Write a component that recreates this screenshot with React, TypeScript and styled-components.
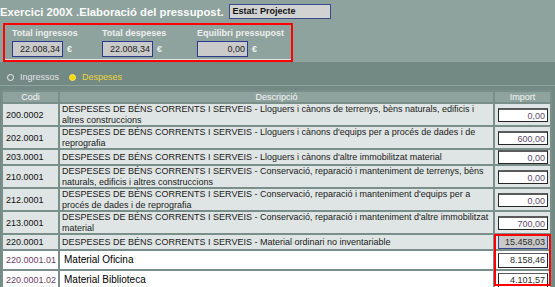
import React from "react";
import styled, { createGlobalStyle } from "styled-components";

type Line = {
  code: string;
  text: string;
  amount: string;
  kind?: "row" | "total" | "sub";
};

const lines: Array<Line> = [
  { code: "200.0002", text: "DESPESES DE BÉNS CORRENTS I SERVEIS - Lloguers i cànons de terrenys, bèns naturals, edificis i altres construccions", amount: "0,00" },
  { code: "202.0001", text: "DESPESES DE BÉNS CORRENTS I SERVEIS - Lloguers i cànons d'equips per a procés de dades i de reprografia", amount: "600,00" },
  { code: "203.0001", text: "DESPESES DE BÉNS CORRENTS I SERVEIS - Lloguers i cànons d'altre immobilitzat material", amount: "0,00" },
  { code: "210.0001", text: "DESPESES DE BÉNS CORRENTS I SERVEIS - Conservació, reparació i manteniment de terrenys, bèns naturals, edificis i altres construccions", amount: "0,00" },
  { code: "212.0001", text: "DESPESES DE BÉNS CORRENTS I SERVEIS - Conservació, reparació i manteniment d'equips per a procés de dades i de reprografia", amount: "0,00" },
  { code: "213.0001", text: "DESPESES DE BÉNS CORRENTS I SERVEIS - Conservació, reparació i manteniment d'altre immobilitzat material", amount: "700,00" },
  { code: "220.0001", text: "DESPESES DE BÉNS CORRENTS I SERVEIS - Material ordinari no inventariable", amount: "15.458,03", kind: "total" },
  { code: "220.0001.01", text: "Material Oficina", amount: "8.158,46", kind: "sub" },
  { code: "220.0001.02", text: "Material Biblioteca", amount: "4.101,57", kind: "sub" },
];

const GlobalStyle = createGlobalStyle`
  html, body {
    margin: 0;
    padding: 0;
  }
  body {
    background: #738984;
    font-family: "Liberation Sans", Arial, sans-serif;
    width: 555px;
    height: 287px;
    overflow: hidden;
  }
`;

const Top = styled.header`
  background: #8fa39e;
  height: 62px;
  overflow: hidden;
`;

const TitleRow = styled.div`
  display: flex;
  align-items: flex-start;
  height: 23px;
`;

const Title = styled.h1`
  margin: 0;
  padding-top: 5px;
  font-size: 11.3px;
  line-height: 14px;
  font-weight: bold;
  color: #fbfbfb;
  white-space: nowrap;
`;

const Estat = styled.div`
  margin: 4px 0 0 5px;
  width: 102px;
  height: 15px;
  box-sizing: border-box;
  background: #d2d2d2;
  border: 1px solid #3b4a8c;
  padding-left: 3px;
  font-size: 9px;
  font-weight: bold;
  line-height: 13px;
  color: #111;
`;

const Totals = styled.section`
  margin-left: 3px;
  width: 290px;
  height: 39px;
  box-sizing: border-box;
  border: 2px solid #ff0000;
`;

const TotalsInner = styled.div`
  display: flex;
  height: 35px;
  box-sizing: border-box;
  border-bottom: 1px solid #dde5e3;
  padding: 3px 0 0 7px;
`;

const Field = styled.div<{ $w?: number }>`
  width: ${(p) => (p.$w ? `${p.$w}px` : "auto")};
`;

const FieldLabel = styled.div`
  font-size: 9px;
  font-weight: bold;
  line-height: 11px;
  color: #eeeeee;
  white-space: nowrap;
`;

const FieldRow = styled.div`
  display: flex;
  align-items: center;
  margin-top: 2px;
`;

const TotalBox = styled.div`
  width: 51px;
  height: 16px;
  box-sizing: border-box;
  background: #cacaca;
  border: 1px solid #2c3a8e;
  padding-right: 2px;
  font-size: 9px;
  line-height: 14px;
  text-align: right;
  color: #222;
`;

const Euro = styled.span`
  margin-left: 4px;
  font-size: 9px;
  font-weight: bold;
  color: #f4f4f4;
`;

const Switch = styled.div`
  display: flex;
  align-items: center;
  height: 24px;
  box-sizing: border-box;
  border-bottom: 1px solid #8fa39e;
  padding: 7px 0 0 7px;
`;

const Option = styled.label<{ $on?: boolean }>`
  display: flex;
  align-items: center;
  margin-right: 10px;
  font-size: 9px;
  color: ${(p) => (p.$on ? "#ead43c" : "#e2e2e2")};

  i {
    width: 7px;
    height: 7px;
    box-sizing: border-box;
    border-radius: 50%;
    margin-right: 6px;
    border: 1px solid ${(p) => (p.$on ? "#ffe85a" : "#f2f2f2")};
    background: ${(p) => (p.$on ? "#ffd800" : "transparent")};
  }
`;

const TableWrap = styled.div`
  position: relative;
  margin: 4px 0 0 1px;
  width: 551px;
`;

const Table = styled.table`
  width: 551px;
  table-layout: fixed;
  border-collapse: separate;
  border-spacing: 2px;
  background: #7a8e8a;
`;

const Mark = styled.div`
  position: absolute;
  left: 493px;
  top: 144px;
  width: 57px;
  height: 52px;
  box-sizing: border-box;
  border: 2px solid #ff0000;
  pointer-events: none;
`;

const Head = styled.th`
  height: 10px;
  padding: 0;
  background: #8fa39e;
  font-size: 9px;
  font-weight: normal;
  line-height: 10px;
  color: #f6f6f6;
`;

const Code = styled.td<{ $sub?: boolean }>`
  padding: ${(p) => (p.$sub ? "0 2px 0 0" : "0 0 0 3px")};
  background: ${(p) => (p.$sub ? "#ffffff" : "#dfe5e4")};
  text-align: ${(p) => (p.$sub ? "right" : "left")};
  font-size: 9px;
  color: ${(p) => (p.$sub ? "#6b3e68" : "#111")};
  white-space: nowrap;
  vertical-align: middle;
`;

const Desc = styled.td<{ $sub?: boolean }>`
  padding: ${(p) => (p.$sub ? "0 2px 0 4px" : "0 1px 0 2px")};
  height: ${(p) => (p.$sub ? "18px" : "auto")};
  background: ${(p) => (p.$sub ? "#ffffff" : "#dfe5e4")};
  font-size: ${(p) => (p.$sub ? "10px" : "9px")};
  line-height: 10.5px;
  color: ${(p) => (p.$sub ? "#000" : "#1a1a1a")};
  vertical-align: middle;
`;

const Cell = styled.td<{ $sub?: boolean }>`
  padding: 0;
  background: ${(p) => (p.$sub ? "#ffffff" : "#dfe5e4")};
  vertical-align: middle;
`;

const Amount = styled.div<{ $kind: "row" | "total" | "sub" }>`
  margin-left: 3px;
  width: 50px;
  height: ${(p) => (p.$kind === "sub" ? "15px" : "14px")};
  box-sizing: border-box;
  padding-right: 2px;
  background: ${(p) => (p.$kind === "total" ? "#c9c9c9" : "#ffffff")};
  border: 1px solid ${(p) => (p.$kind === "total" ? "#3a4590" : "#262626")};
  border-top-width: ${(p) => (p.$kind === "row" ? "2px" : "1px")};
  border-top-color: ${(p) => (p.$kind === "total" ? "#3a4590" : "#5a5a5a")};
  font-size: 9px;
  line-height: 12px;
  text-align: right;
  color: ${(p) => (p.$kind === "row" ? "#5b4c6c" : "#2e2e2e")};
`;

export default function App() {
  return (
    <>
      <GlobalStyle />
      <Top>
        <TitleRow>
          <Title>Exercici 200X .Elaboració del pressupost.</Title>
          <Estat>Estat: Projecte</Estat>
        </TitleRow>
        <Totals>
          <TotalsInner>
            <Field $w={90}>
              <FieldLabel>Total ingressos</FieldLabel>
              <FieldRow>
                <TotalBox>22.008,34</TotalBox>
                <Euro>€</Euro>
              </FieldRow>
            </Field>
            <Field $w={95}>
              <FieldLabel>Total despeses</FieldLabel>
              <FieldRow>
                <TotalBox>22.008,34</TotalBox>
                <Euro>€</Euro>
              </FieldRow>
            </Field>
            <Field>
              <FieldLabel>Equilibri pressupost</FieldLabel>
              <FieldRow>
                <TotalBox>0,00</TotalBox>
                <Euro>€</Euro>
              </FieldRow>
            </Field>
          </TotalsInner>
        </Totals>
      </Top>

      <Switch>
        <Option>
          <i />
          Ingressos
        </Option>
        <Option $on>
          <i />
          Despeses
        </Option>
      </Switch>

      <TableWrap>
        <Table>
          <colgroup>
            <col style={{ width: 55 }} />
            <col style={{ width: 433 }} />
            <col style={{ width: 55 }} />
          </colgroup>
          <thead>
            <tr>
              <Head>Codi</Head>
              <Head>Descripció</Head>
              <Head>Import</Head>
            </tr>
          </thead>
          <tbody>
            {lines.map((line) => {
              const sub = line.kind === "sub";
              return (
                <tr key={line.code}>
                  <Code $sub={sub}>{line.code}</Code>
                  <Desc $sub={sub}>{line.text}</Desc>
                  <Cell $sub={sub}>
                    <Amount $kind={line.kind ?? "row"}>{line.amount}</Amount>
                  </Cell>
                </tr>
              );
            })}
          </tbody>
        </Table>
        <Mark />
      </TableWrap>
    </>
  );
}
